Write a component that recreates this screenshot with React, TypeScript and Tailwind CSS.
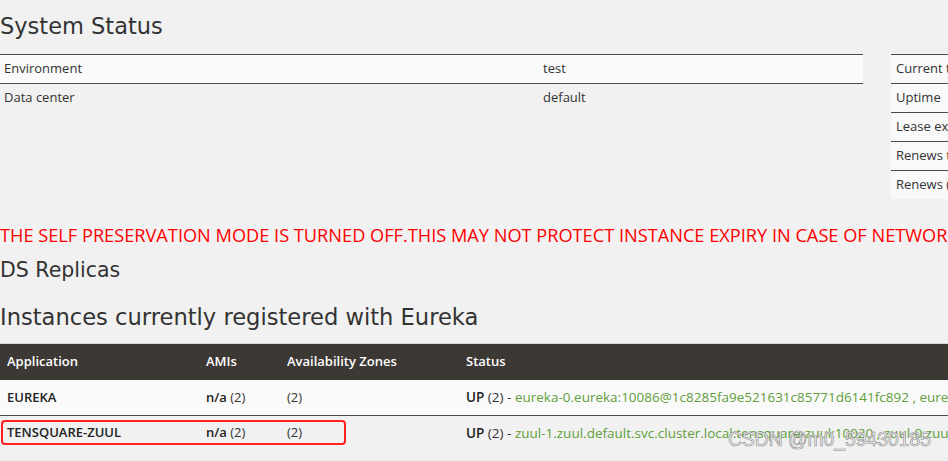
import React from "react";

const leftRows = [
  { label: "Environment", value: "test" },
  { label: "Data center", value: "default" },
];

const rightRows = ["Current time", "Uptime", "Lease expiration enabled", "Renews threshold", "Renews (last min)"];

const apps = [
  {
    name: "EUREKA",
    links: "eureka-0.eureka:10086@1c8285fa9e521631c85771d6141fc892 , eureka-1.eureka:10086@5b2e1f0a",
  },
  {
    name: "TENSQUARE-ZUUL",
    links: "zuul-1.zuul.default.svc.cluster.local:tensquare-zuul:10020 , zuul-0.zuul.default.svc.cluster.local:tensquare-zuul:10020",
  },
];

const App: React.FC = () => {
  return (
    <div className="relative w-[948px] h-[461px] overflow-hidden bg-[#f1f1f1] text-[13px] text-[#333] font-['Open_Sans',sans-serif]">
      <h2 className="h-[54px] pt-[11px] text-[22.5px] leading-[30px] font-['DejaVu_Sans',sans-serif] text-[#333] whitespace-nowrap">
        System Status
      </h2>

      <div className="flex gap-[28px] items-start">
        <div className="w-[863px] shrink-0">
          {leftRows.map((r, i) => (
            <div
              key={r.label}
              className={`flex h-[29px] items-center border-t border-[#4a4a4a] ${i === 0 ? "bg-[#fafafa]" : ""}`}
            >
              <div className="w-[539px] shrink-0 pl-[4px]">{r.label}</div>
              <div className="pl-[4px]">{r.value}</div>
            </div>
          ))}
        </div>
        <div className="w-[200px] shrink-0 bg-[#f9f9f9]">
          {rightRows.map((r) => (
            <div key={r} className="h-[29px] flex items-center pl-[5px] whitespace-nowrap border-t border-[#4a4a4a]">
              {r}
            </div>
          ))}
        </div>
      </div>

      <div className="mt-[26px] h-[20px] leading-[20px] text-[18.2px] text-[#ff0000] whitespace-nowrap">
        THE SELF PRESERVATION MODE IS TURNED OFF.THIS MAY NOT PROTECT INSTANCE EXPIRY IN CASE OF NETWORK/OTHER PROBLEMS.
      </div>

      <h2 className="mt-[12px] h-[26px] leading-[26px] text-[20.5px] font-['DejaVu_Sans',sans-serif]">DS Replicas</h2>

      <h2 className="mt-[20px] h-[28px] leading-[28px] text-[22.6px] font-['DejaVu_Sans',sans-serif] whitespace-nowrap">
        Instances currently registered with Eureka
      </h2>

      <div className="relative mt-[12px] border-t border-[#d6d6d6]">
        <div className="flex h-[36px] items-center bg-[#3c3834] text-white font-semibold whitespace-nowrap">
          <div className="w-[199px] shrink-0 pl-[7px]">Application</div>
          <div className="w-[81px] shrink-0 pl-[7px]">AMIs</div>
          <div className="w-[179px] shrink-0 pl-[7px]">Availability Zones</div>
          <div className="pl-[7px]">Status</div>
        </div>
        {apps.map((a, i) => (
          <div
            key={a.name}
            className={`flex h-[35px] items-center whitespace-nowrap ${i === 0 ? "bg-[#fafafa]" : "border-t border-[#4a4a4a]"}`}
          >
            <div className="w-[199px] shrink-0 pl-[7px] font-semibold text-[#222]">{a.name}</div>
            <div className="w-[81px] shrink-0 pl-[7px]">
              <span className="font-semibold text-[#222]">n/a</span> (2)
            </div>
            <div className="w-[179px] shrink-0 pl-[7px]">(2)</div>
            <div className="pl-[7px] text-[13.5px]">
              <span className="font-semibold text-[#222]">UP</span> (2) -{" "}
              <span className="text-[#5f9e3a]">{a.links}</span>
            </div>
          </div>
        ))}

        <div className="absolute left-[1px] top-[76px] w-[345px] h-[25px] rounded-[4px] border-2 border-[#ff2020]" />
      </div>

      <div className="absolute left-[728px] top-[428px] text-[19.3px] leading-[24px] font-['Liberation_Sans',sans-serif] text-[#f4f4f4] [-webkit-text-stroke:0.6px_#8a8a8a] whitespace-nowrap">
        CSDN @m0_59430185
      </div>
    </div>
  );
};

export default App;
